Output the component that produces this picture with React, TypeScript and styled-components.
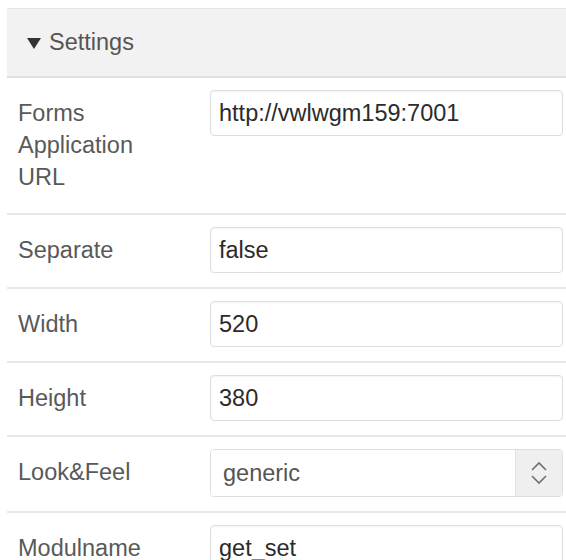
import styled, { createGlobalStyle } from 'styled-components';

const GlobalStyle = createGlobalStyle`
  html, body {
    margin: 0;
    padding: 0;
    background: #fff;
    overflow: hidden;
  }
  body {
    font-family: "Liberation Sans", Arial, sans-serif;
  }
`;

const Panel = styled.section`
  margin: 8px 0 0 7px;
  width: 569px;
`;

const Header = styled.div`
  height: 67px;
  display: flex;
  align-items: center;
  gap: 8px;
  padding-left: 20px;
  background: #f2f2f2;
  border-top: 1px solid #e4e4e4;
  border-bottom: 2px solid #e0e0e0;
  font-size: 23.5px;
  color: #555;
  cursor: pointer;
`;

const Caret = styled.span`
  width: 0;
  height: 0;
  margin-top: 2px;
  border-left: 7.5px solid transparent;
  border-right: 7.5px solid transparent;
  border-top: 11px solid #333;
`;

const Row = styled.div`
  display: grid;
  grid-template-columns: 192px 1fr;
  align-items: start;
  padding: 12px 13px 14px 11px;
  border-bottom: 2px solid #e8e8e8;

  &:first-of-type {
    padding-top: 10px;
  }
`;

const Label = styled.label`
  padding-top: 7px;
  margin-bottom: 6px;
  font-size: 23.5px;
  line-height: 32px;
  color: #595959;
`;

const TextInput = styled.input`
  box-sizing: border-box;
  width: 100%;
  height: 46px;
  padding: 0 8px;
  border: 1px solid #dedede;
  border-radius: 4px;
  box-shadow: inset 0 1px 2px rgba(0, 0, 0, 0.05);
  font-family: inherit;
  font-size: 23.5px;
  color: #2b2b2b;
  background: #fff;
  outline: none;
`;

const SelectBox = styled.div`
  display: flex;
  height: 46px;
  border: 1px solid #dedede;
  border-radius: 4px;
  overflow: hidden;
  box-shadow: inset 0 1px 2px rgba(0, 0, 0, 0.05);
`;

const Select = styled.select`
  flex: 1;
  appearance: none;
  border: none;
  padding: 0 12px;
  font-family: inherit;
  font-size: 23.5px;
  color: #555;
  background: #fff;
  outline: none;
`;

const Stepper = styled.span`
  width: 46px;
  display: flex;
  align-items: center;
  justify-content: center;
  background: #efefef;
  border-left: 1px solid #e2e2e2;
`;

const settings = [
  { label: 'Separate', value: 'false' },
  { label: 'Width', value: '520' },
  { label: 'Height', value: '380' },
];

const App = () => (
  <>
    <GlobalStyle />
    <Panel>
      <Header>
        <Caret />
        Settings
      </Header>

      <Row>
        <Label>
          Forms
          <br />
          Application
          <br />
          URL
        </Label>
        <TextInput defaultValue="http://vwlwgm159:7001" />
      </Row>

      {settings.map((s) => (
        <Row key={s.label}>
          <Label>{s.label}</Label>
          <TextInput defaultValue={s.value} />
        </Row>
      ))}

      <Row>
        <Label>Look&amp;Feel</Label>
        <SelectBox>
          <Select defaultValue="generic">
            <option value="generic">generic</option>
            <option value="oracle">oracle</option>
          </Select>
          <Stepper>
            <svg width="18" height="26" viewBox="0 0 18 26" fill="none" stroke="#707070" strokeWidth="1.6">
              <path d="M2 10 L9 3 L16 10" />
              <path d="M2 16 L9 23 L16 16" />
            </svg>
          </Stepper>
        </SelectBox>
      </Row>

      <Row>
        <Label>Modulname</Label>
        <TextInput defaultValue="get_set" />
      </Row>
    </Panel>
  </>
);

export default App;
